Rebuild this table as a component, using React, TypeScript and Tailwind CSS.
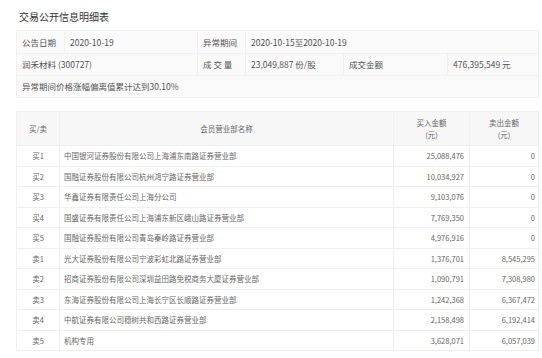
const FONT = "font-['Noto_Sans_CJK_SC','Noto_Sans',sans-serif]";

const ROWS: { side: string; name: string; buy: string; sell: string }[] = [
  { side: "买1", name: "中国银河证券股份有限公司上海浦东南路证券营业部", buy: "25,088,476", sell: "0" },
  { side: "买2", name: "国融证券股份有限公司杭州鸿宁路证券营业部", buy: "10,034,927", sell: "0" },
  { side: "买3", name: "华鑫证券有限责任公司上海分公司", buy: "9,103,076", sell: "0" },
  { side: "买4", name: "国盛证券有限责任公司上海浦东新区峨山路证券营业部", buy: "7,769,350", sell: "0" },
  { side: "买5", name: "国融证券股份有限公司青岛秦岭路证券营业部", buy: "4,976,916", sell: "0" },
  { side: "卖1", name: "光大证券股份有限公司宁波彩虹北路证券营业部", buy: "1,376,701", sell: "8,545,295" },
  { side: "卖2", name: "招商证券股份有限公司深圳益田路免税商务大厦证券营业部", buy: "1,090,791", sell: "7,308,980" },
  { side: "卖3", name: "东海证券股份有限公司上海长宁区长顺路证券营业部", buy: "1,242,368", sell: "6,367,472" },
  { side: "卖4", name: "中航证券有限公司穗树共和西路证券营业部", buy: "2,158,498", sell: "6,192,414" },
  { side: "卖5", name: "机构专用", buy: "3,628,071", sell: "6,057,039" },
];

const cell = "border border-[#f0f0f0] px-[5px] p-0";

export default function App() {
  return (
    <div className={`w-[542px] h-[358px] bg-white overflow-hidden ${FONT}`}>
      <h1 className="pl-[19px] pt-[10px] h-[30px] text-[10px] leading-[14px] text-[#333]">
        交易公开信息明细表
      </h1>

      <table className="ml-[16px] w-[522px] table-fixed border-collapse bg-[#fafafa] text-[8.5px] text-[#555]">
        <colgroup>
          <col className="w-[48px]" />
          <col className="w-[133px]" />
          <col className="w-[48px]" />
          <col className="w-[98px]" />
          <col className="w-[104px]" />
          <col className="w-[91px]" />
        </colgroup>
        <tbody>
          <tr className="h-[23px]">
            <td className={cell}>公告日期</td>
            <td className={cell}>2020-10-19</td>
            <td className={cell}>异常期间</td>
            <td className={cell} colSpan={3}>2020-10-15至2020-10-19</td>
          </tr>
          <tr className="h-[22px]">
            <td className={cell} colSpan={2}>润禾材料 (300727)</td>
            <td className={cell}>成 交 量</td>
            <td className={cell}>23,049,887 份/股</td>
            <td className={cell}>成交金额</td>
            <td className={cell}>476,395,549 元</td>
          </tr>
          <tr className="h-[22px]">
            <td className={cell} colSpan={6}>异常期间价格涨幅偏离值累计达到30.10%</td>
          </tr>
        </tbody>
      </table>

      <table className="ml-[16px] mt-[13px] w-[522px] table-fixed border-collapse text-[7.5px] text-[#666]">
        <colgroup>
          <col className="w-[43px]" />
          <col className="w-[334px]" />
          <col className="w-[76px]" />
          <col className="w-[69px]" />
        </colgroup>
        <thead>
          <tr className="h-[34px] bg-[#f7f7f7] leading-[12px]">
            <th className={`${cell} font-normal text-center`}>买/卖</th>
            <th className={`${cell} font-normal text-center`}>会员营业部名称</th>
            <th className={`${cell} font-normal text-center`}>
              买入金额
              <br />
              (元)
            </th>
            <th className={`${cell} font-normal text-center`}>
              卖出金额
              <br />
              (元)
            </th>
          </tr>
        </thead>
        <tbody>
          {ROWS.map((r) => (
            <tr key={r.side} className="h-[20.5px]">
              <td className={`${cell} text-center`}>{r.side}</td>
              <td className={`${cell} pl-[4px]`}>{r.name}</td>
              <td className={`${cell} text-right`}>{r.buy}</td>
              <td className={`${cell} text-right pr-[3px]`}>{r.sell}</td>
            </tr>
          ))}
        </tbody>
      </table>
    </div>
  );
}
